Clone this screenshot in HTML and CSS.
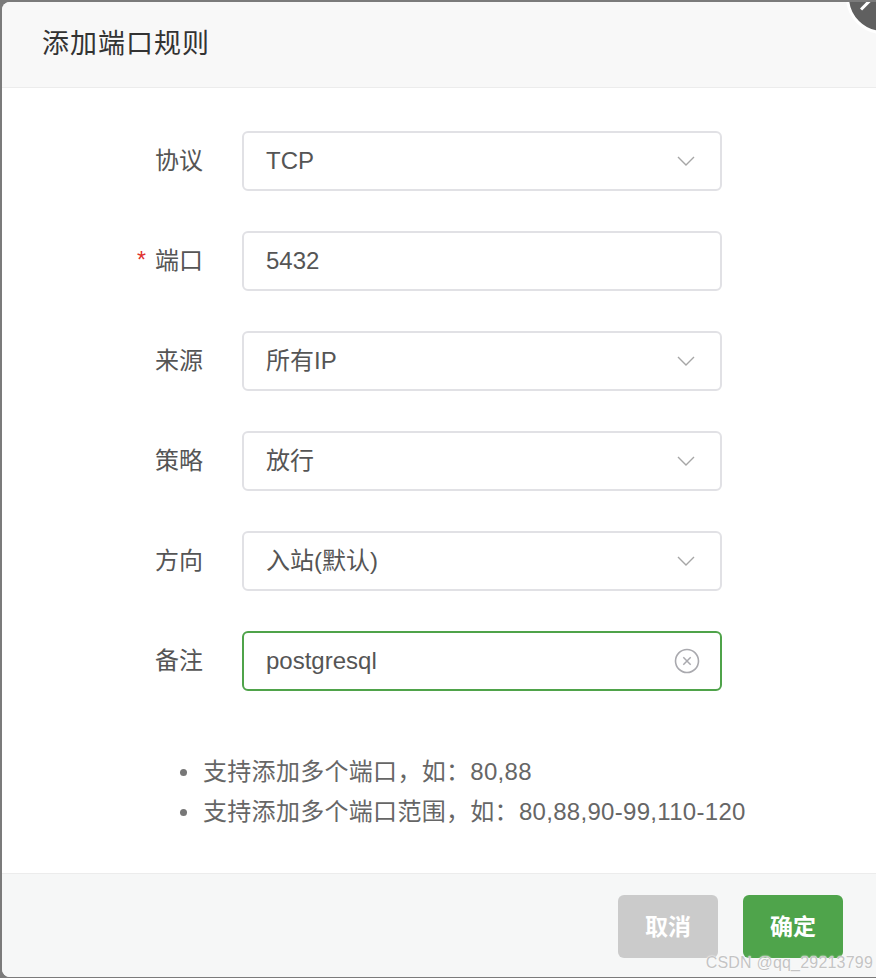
FILE: index.html
```html
<!DOCTYPE html>
<html lang="zh-CN">
<head>
<meta charset="utf-8">
<title>添加端口规则</title>
<link rel="stylesheet" href="styles.css">
</head>
<body>
<div class="dialog">
  <div class="dialog-header">
    <h1 class="dialog-title">添加端口规则</h1>
  </div>
  <div class="dialog-body">
    <div class="form-row">
      <div class="form-label">协议</div>
      <div class="field select">
        <span class="field-value">TCP</span>
        <svg class="chevron" width="18" height="10" viewBox="0 0 18 10"><path d="M1 1 L9 9 L17 1" fill="none" stroke="#a6a6a6" stroke-width="1.4"/></svg>
      </div>
    </div>
    <div class="form-row">
      <div class="form-label"><span class="required">*</span>端口</div>
      <div class="field">
        <span class="field-value">5432</span>
      </div>
    </div>
    <div class="form-row">
      <div class="form-label">来源</div>
      <div class="field select">
        <span class="field-value">所有IP</span>
        <svg class="chevron" width="18" height="10" viewBox="0 0 18 10"><path d="M1 1 L9 9 L17 1" fill="none" stroke="#a6a6a6" stroke-width="1.4"/></svg>
      </div>
    </div>
    <div class="form-row">
      <div class="form-label">策略</div>
      <div class="field select">
        <span class="field-value">放行</span>
        <svg class="chevron" width="18" height="10" viewBox="0 0 18 10"><path d="M1 1 L9 9 L17 1" fill="none" stroke="#a6a6a6" stroke-width="1.4"/></svg>
      </div>
    </div>
    <div class="form-row">
      <div class="form-label">方向</div>
      <div class="field select">
        <span class="field-value">入站(默认)</span>
        <svg class="chevron" width="18" height="10" viewBox="0 0 18 10"><path d="M1 1 L9 9 L17 1" fill="none" stroke="#a6a6a6" stroke-width="1.4"/></svg>
      </div>
    </div>
    <div class="form-row">
      <div class="form-label">备注</div>
      <div class="field focused">
        <span class="field-value">postgresql</span>
        <svg class="clear" width="26" height="26" viewBox="0 0 26 26"><circle cx="13" cy="13" r="11.5" fill="none" stroke="#a9a9ae" stroke-width="1.6"/><path d="M9.3 9.3 L16.7 16.7 M16.7 9.3 L9.3 16.7" stroke="#a9a9ae" stroke-width="1.5"/></svg>
      </div>
    </div>
    <ul class="tips">
      <li>支持添加多个端口，如：80,88</li>
      <li>支持添加多个端口范围，如：80,88,90-99,110-120</li>
    </ul>
  </div>
  <div class="dialog-footer">
    <button class="btn btn-cancel">取消</button>
    <button class="btn btn-ok">确定</button>
  </div>
  <div class="close-btn"></div>
  <div class="watermark">CSDN @qq_29213799</div>
</div>
</body>
</html>
```
FILE: styles.css
```css
html, body {
  margin: 0;
  padding: 0;
}
body {
  width: 876px;
  height: 978px;
  overflow: hidden;
  background: #7b7b7b;
  font-family: "Liberation Sans", "Noto Sans CJK SC", sans-serif;
}
.dialog {
  position: relative;
  margin: 2px 0 0 2px;
  width: 874px;
  height: 975px;
  background: #fff;
  border-radius: 8px 0 0 8px;
  overflow: hidden;
  display: flex;
  flex-direction: column;
}
.dialog-header {
  height: 85px;
  background: #f8f8f8;
  border-bottom: 1px solid #ececec;
  display: flex;
  align-items: center;
  padding-left: 40px;
  flex-shrink: 0;
}
.dialog-title {
  margin: 0;
  font-size: 27px;
  font-weight: normal;
  color: #333;
  line-height: 1;
  letter-spacing: 1px;
}
.dialog-body {
  flex: 1;
  padding-top: 43px;
}
.form-row {
  display: flex;
  align-items: center;
  height: 60px;
  margin-bottom: 40px;
}
.form-label {
  width: 240px;
  padding-right: 39px;
  box-sizing: border-box;
  text-align: right;
  font-size: 24px;
  color: #555;
  line-height: 1;
}
.required {
  color: #e0312e;
  font-size: 23px;
  margin-right: 9px;
  position: relative;
  top: -1px;
}
.field {
  box-sizing: border-box;
  width: 480px;
  height: 60px;
  border: 2px solid #e1e1e5;
  border-radius: 6px;
  display: flex;
  align-items: center;
  padding: 0 22px;
}
.field.focused {
  border-color: #4fa34a;
}
.field-value {
  flex: 1;
  font-size: 24px;
  color: #555;
  line-height: 1;
}
.chevron {
  margin-right: 3px;
}
.clear {
  margin-right: -2px;
}
.tips {
  list-style: none;
  margin: 61px 0 0 0;
  padding: 0 0 0 178px;
}
.tips li {
  position: relative;
  padding-left: 23px;
  font-size: 24px;
  line-height: 40px;
  color: #666;
  letter-spacing: 0.3px;
}
.tips li::before {
  content: "";
  position: absolute;
  left: 0;
  top: 17px;
  width: 7px;
  height: 7px;
  border-radius: 50%;
  background: #777;
}
.dialog-footer {
  flex-shrink: 0;
  height: 104px;
  background: #f6f7f7;
  border-top: 1px solid #ececec;
  display: flex;
  justify-content: flex-end;
  align-items: flex-start;
  padding: 21px 33px 0 0;
  box-sizing: border-box;
  gap: 25px;
}
.btn {
  width: 100px;
  height: 63px;
  border: none;
  border-radius: 6px;
  color: #fff;
  font-family: "Liberation Sans", "Noto Sans CJK SC", sans-serif;
  font-size: 23px;
  font-weight: bold;
  padding: 0 0 4px 0;
}
.btn-cancel {
  background: #cbcbcb;
}
.btn-ok {
  background: #4fa44b;
}
.close-btn {
  position: absolute;
  right: -44px;
  top: -42px;
  width: 68px;
  height: 68px;
  border-radius: 50%;
  background: #606060;
  border: 3px solid #fff;
}
.close-btn::after {
  content: "";
  position: absolute;
  left: 10px;
  top: 40px;
  width: 14px;
  height: 3px;
  background: #fff;
  transform: rotate(-45deg);
}
.watermark {
  position: absolute;
  right: 3px;
  bottom: 5px;
  font-size: 16px;
  color: #c4c4c4;
  text-shadow: 0 0 2px #fff, 0 0 1px #fff;
  letter-spacing: 0.2px;
}
```
